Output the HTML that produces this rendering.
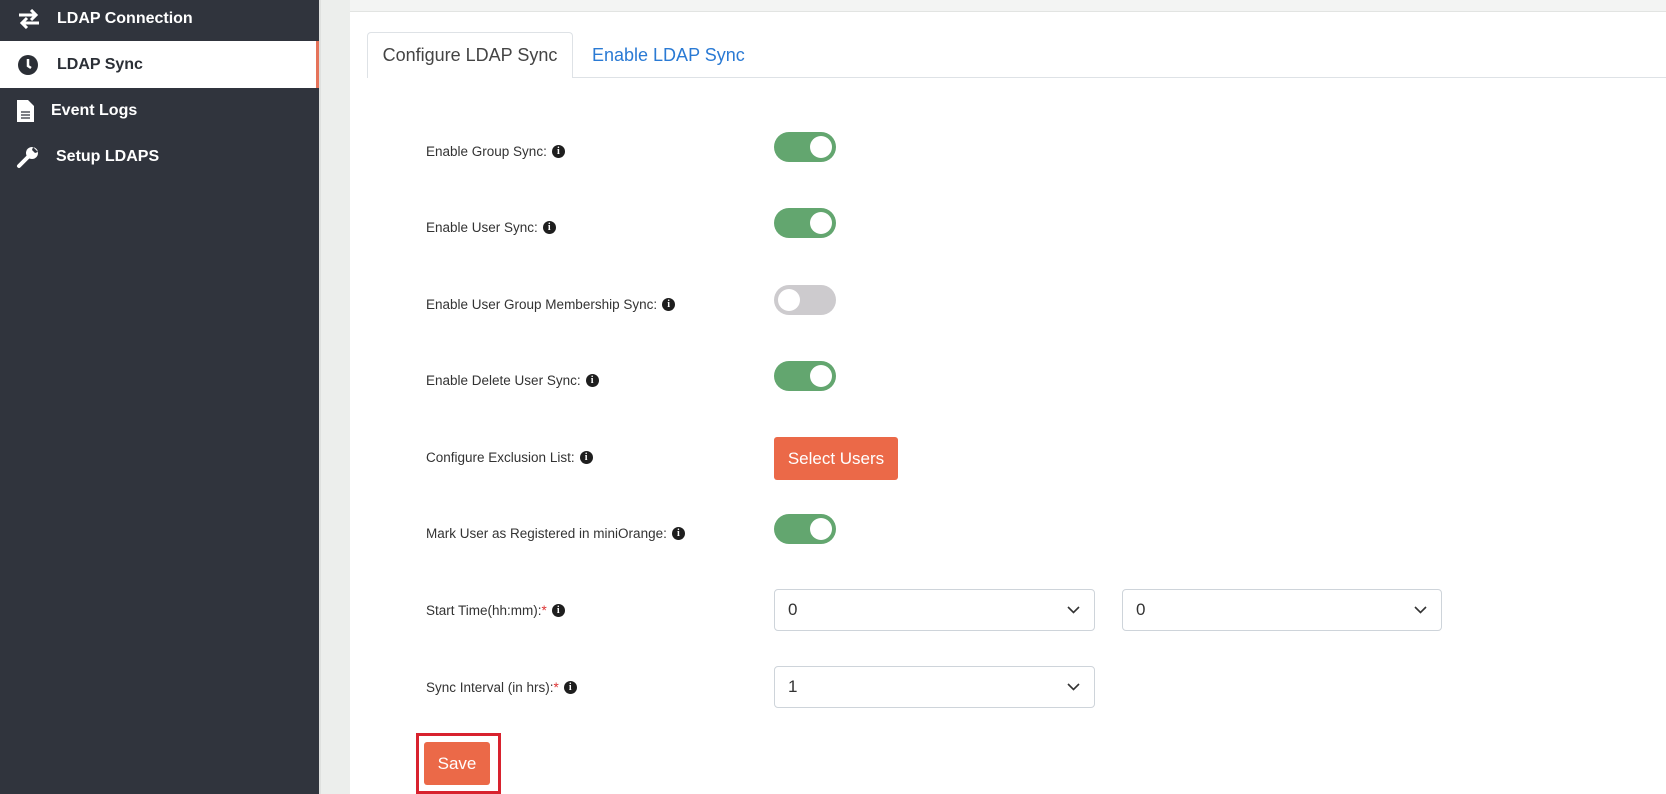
<!DOCTYPE html>
<html><head><meta charset="utf-8"><style>
*{box-sizing:border-box;margin:0;padding:0}
body{width:1666px;height:794px;overflow:hidden;background:#fff;font-family:"Liberation Sans",sans-serif;position:relative}
.sb{position:absolute;left:0;top:0;width:319px;height:794px;background:#30343d}
.it{position:absolute;left:0;width:319px;height:44px;color:#fff;font-weight:bold;font-size:16px;display:flex;align-items:center}
.it svg{position:absolute}
.it span{position:absolute}
.act{background:#fff;color:#2b2f36;border-right:3px solid #e5735a;height:47px}
.gap{position:absolute;left:319px;top:0;width:31px;height:794px;background:#eceeec;border-left:2px solid #dfe1df}
.top{position:absolute;left:350px;top:0;right:0;height:12px;background:#f3f4f3;border-bottom:1px solid #e2e4e2}
.tabline{position:absolute;left:367px;right:0;top:77px;border-top:1px solid #dee2e6}
.tab{position:absolute;top:32px;height:46px;font-size:18px;display:flex;align-items:center}
.t1{left:367px;width:206px;border:1px solid #dee2e6;border-bottom:none;border-radius:4px 4px 0 0;background:#fff;color:#444;justify-content:center}
.t2{left:592px;color:#2a7ad4}
.lab{position:absolute;left:426px;font-size:13.5px;color:#333;display:flex;align-items:center;height:20px}
.i{display:inline-block;width:13px;height:13px;border-radius:50%;background:#1e1e1e;color:#fff;font-size:10px;font-weight:bold;text-align:center;line-height:13px;margin-left:5px;font-family:"Liberation Serif",serif}
.req{color:#d33}
.tg{position:absolute;left:774px;width:62px;height:30px;border-radius:15px;background:#63a66f}
.tg::after{content:"";position:absolute;right:4px;top:4px;width:22px;height:22px;border-radius:50%;background:#fff}
.tg.off{background:#cdcbce}
.tg.off::after{right:auto;left:4px}
.btn{position:absolute;background:#eb6948;color:#fff;border-radius:3px;display:flex;align-items:center;justify-content:center}
.sel{position:absolute;height:42px;border:1px solid #ced4da;border-radius:4px;font-size:17px;color:#333;padding-left:13px;display:flex;align-items:center}
.sel svg{position:absolute;right:14px;top:16px}
</style></head><body>
<div class="sb">
 <div class="it" style="top:0;height:38px"><svg style="left:17px" width="24" height="20" viewBox="0 0 24 20"><path d="M2 6h17M14 1l5 5-5 5M22 14H5M10 9l-5 5 5 5" stroke="#fff" stroke-width="3" fill="none"/></svg><span style="left:57px">LDAP Connection</span></div>
 <div class="it act" style="top:41px"><svg style="left:17px" width="22" height="22" viewBox="0 0 22 22"><circle cx="11" cy="11" r="10" fill="#2b2f36"/><path d="M11 5v7l3 2" stroke="#fff" stroke-width="2.5" fill="none"/></svg><span style="left:57px">LDAP Sync</span></div>
 <div class="it" style="top:89px"><svg style="left:17px" width="17" height="22" viewBox="0 0 17 22"><path d="M0 0h11l6 6v16H0z" fill="#fff"/><path d="M4 12h9M4 15h9M4 18h9" stroke="#30343d" stroke-width="1.3"/></svg><span style="left:51px">Event Logs</span></div>
 <div class="it" style="top:135px"><svg style="left:16px" width="24" height="24" viewBox="0 0 24 24"><path d="M3 21l10-10" stroke="#fff" stroke-width="4" stroke-linecap="round"/><circle cx="16" cy="8" r="6" fill="#fff"/><path d="M17 2l5 5-3 1-3-3z" fill="#30343d"/></svg><span style="left:56px">Setup LDAPS</span></div>
</div>
<div class="gap"></div>
<div class="top"></div>
<div class="tabline"></div>
<div class="tab t1">Configure LDAP Sync</div>
<div class="tab t2">Enable LDAP Sync</div>

<div class="lab" style="top:141px">Enable Group Sync:<span class="i">i</span></div>
<div class="tg" style="top:132px"></div>
<div class="lab" style="top:217px">Enable User Sync:<span class="i">i</span></div>
<div class="tg" style="top:208px"></div>
<div class="lab" style="top:294px">Enable User Group Membership Sync:<span class="i">i</span></div>
<div class="tg off" style="top:285px"></div>
<div class="lab" style="top:370px">Enable Delete User Sync:<span class="i">i</span></div>
<div class="tg" style="top:361px"></div>
<div class="lab" style="top:447px">Configure Exclusion List:<span class="i">i</span></div>
<div class="btn" style="left:774px;top:437px;width:124px;height:43px;font-size:17px">Select Users</div>
<div class="lab" style="top:523px">Mark User as Registered in miniOrange:<span class="i">i</span></div>
<div class="tg" style="top:514px"></div>
<div class="lab" style="top:600px">Start Time(hh:mm):<span class="req">*</span><span class="i">i</span></div>
<div class="sel" style="left:774px;top:589px;width:321px">0<svg width="13" height="8" viewBox="0 0 13 8"><path d="M1 1l5.5 5.5L12 1" stroke="#333" stroke-width="1.6" fill="none"/></svg></div>
<div class="sel" style="left:1122px;top:589px;width:320px">0<svg width="13" height="8" viewBox="0 0 13 8"><path d="M1 1l5.5 5.5L12 1" stroke="#333" stroke-width="1.6" fill="none"/></svg></div>
<div class="lab" style="top:677px">Sync Interval (in hrs):<span class="req">*</span><span class="i">i</span></div>
<div class="sel" style="left:774px;top:666px;width:321px">1<svg width="13" height="8" viewBox="0 0 13 8"><path d="M1 1l5.5 5.5L12 1" stroke="#333" stroke-width="1.6" fill="none"/></svg></div>
<div style="position:absolute;left:416px;top:733px;width:85px;height:61px;border:3px solid #d8222e"></div>
<div class="btn" style="left:424px;top:742px;width:66px;height:43px;font-size:17px">Save</div>
</body></html>
